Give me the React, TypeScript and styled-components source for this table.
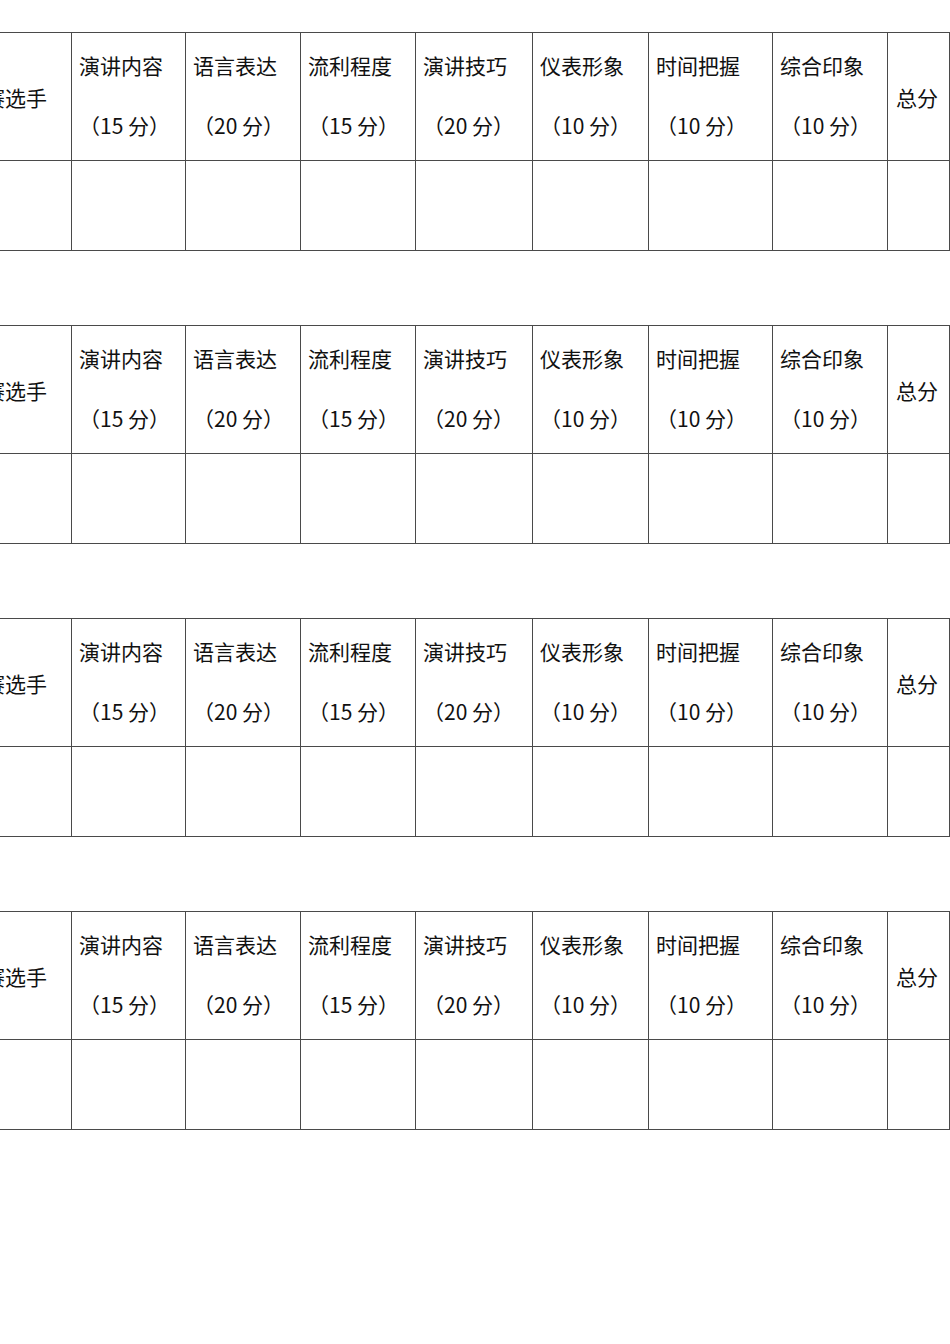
import styled, { createGlobalStyle } from 'styled-components';

const GlobalStyle = createGlobalStyle`
  html, body {
    margin: 0;
    padding: 0;
    background: #ffffff;
    overflow: hidden;
  }
  body {
    font-family: "Noto Sans CJK SC", "Noto Sans", sans-serif;
    color: #111;
  }
`;

const Page = styled.div`
  width: 950px;
  height: 1344px;
  overflow: hidden;
  padding-top: 32px;
  box-sizing: border-box;
  display: flex;
  flex-direction: column;
  gap: 74px;
`;

const Sheet = styled.table`
  border-collapse: collapse;
  margin-left: -40px;
  table-layout: fixed;
  width: 989px;
`;

const Cell = styled.td`
  border: 1px solid #4a4a4a;
  padding: 2px 8px 0 7px;
  vertical-align: top;
  font-size: 21px;
  line-height: 60px;
  white-space: nowrap;
  text-align: left;
`;

const SideCell = styled(Cell)<{ $inset: number }>`
  padding: 0 0 0 ${(p) => p.$inset}px;
  vertical-align: middle;
`;

const Score = styled.span`
  display: block;
`;

const HeadRow = styled.tr`
  height: 128px;
`;

const BodyRow = styled.tr`
  height: 90px;
`;

const items = [
  ['演讲内容', '（15 分）'],
  ['语言表达', '（20 分）'],
  ['流利程度', '（15 分）'],
  ['演讲技巧', '（20 分）'],
  ['仪表形象', '（10 分）'],
  ['时间把握', '（10 分）'],
  ['综合印象', '（10 分）'],
];

const widths = [111, 114, 115, 115, 117, 116, 124, 115, 62];

const ScoreSheet = () => (
  <Sheet>
    <colgroup>
      {widths.map((w, i) => (
        <col key={i} style={{ width: w }} />
      ))}
    </colgroup>
    <tbody>
      <HeadRow>
        <SideCell $inset={2}>参赛选手</SideCell>
        {items.map(([name, score]) => (
          <Cell key={name}>
            {name}
            <Score>{score}</Score>
          </Cell>
        ))}
        <SideCell $inset={8}>总分</SideCell>
      </HeadRow>
      <BodyRow>
        {widths.map((_, i) => (
          <Cell key={i} />
        ))}
      </BodyRow>
    </tbody>
  </Sheet>
);

export default function App() {
  return (
    <>
      <GlobalStyle />
      <Page>
        <ScoreSheet />
        <ScoreSheet />
        <ScoreSheet />
        <ScoreSheet />
      </Page>
    </>
  );
}
